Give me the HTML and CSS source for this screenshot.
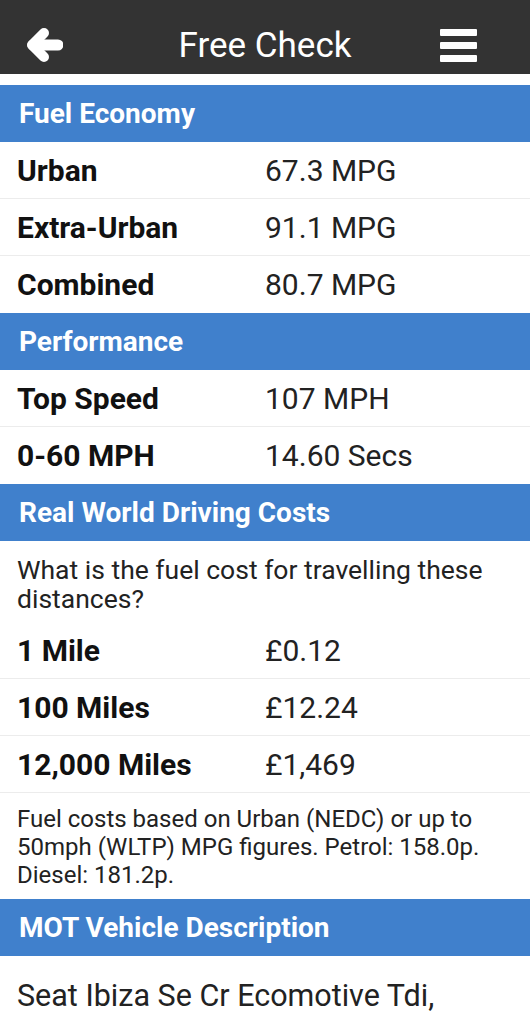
FILE: index.html
```html
<!DOCTYPE html>
<html>
<head>
	<meta charset="utf-8">
	<title>Free Check</title>
	<link rel="stylesheet" href="styles.css">
</head>
<body>
	<header class="topbar">
		<span class="icono atras">
			<svg width="36" height="36" viewBox="0 0 36 36">
				<path d="M6 18 H31" stroke="#fff" stroke-width="11" stroke-linecap="round" fill="none"/>
				<path d="M17 6 L5 18 L17 30" stroke="#fff" stroke-width="10" stroke-linecap="round" stroke-linejoin="round" fill="none"/>
			</svg>
		</span>
		<h1>Free Check</h1>
		<span class="icono menu">
			<span></span><span></span><span></span>
		</span>
	</header>

	<section class="bloque">
		<h2>Fuel Economy</h2>
		<div class="fila"><span class="etiqueta">Urban</span><span class="valor">67.3 MPG</span></div>
		<div class="fila"><span class="etiqueta">Extra-Urban</span><span class="valor">91.1 MPG</span></div>
		<div class="fila"><span class="etiqueta">Combined</span><span class="valor">80.7 MPG</span></div>
	</section>

	<section class="bloque">
		<h2>Performance</h2>
		<div class="fila"><span class="etiqueta">Top Speed</span><span class="valor">107 MPH</span></div>
		<div class="fila"><span class="etiqueta">0-60 MPH</span><span class="valor">14.60 Secs</span></div>
	</section>

	<section class="bloque">
		<h2>Real World Driving Costs</h2>
		<p class="pregunta">What is the fuel cost for travelling these distances?</p>
		<div class="fila"><span class="etiqueta">1 Mile</span><span class="valor">£0.12</span></div>
		<div class="fila"><span class="etiqueta">100 Miles</span><span class="valor">£12.24</span></div>
		<div class="fila"><span class="etiqueta">12,000 Miles</span><span class="valor">£1,469</span></div>
		<p class="nota">Fuel costs based on Urban (NEDC) or up to 50mph (WLTP) MPG figures. Petrol: 158.0p. Diesel: 181.2p.</p>
	</section>

	<section class="bloque">
		<h2>MOT Vehicle Description</h2>
		<p class="descripcion">Seat Ibiza Se Cr Ecomotive Tdi,</p>
	</section>
</body>
</html>
```

FILE: styles.css
```css
body {
	margin: 0;
	font-family: Roboto, "Liberation Sans", sans-serif;
	color: #222;
	background-color: #fff;
}
.topbar {
	display: grid;
	grid-template-columns: 1fr auto 1fr;
	align-items: center;
	height: 58px;
	padding: 16px 27px 0;
	background-color: #333;
	margin-bottom: 11px;
}
.topbar h1 {
	margin: 0;
	font-size: 35px;
	font-weight: normal;
	color: #fff;
}
.icono {
	display: flex;
	width: 37px;
}
.atras svg {
	display: block;
}
.menu {
	justify-self: end;
	margin-right: 26px;
	flex-direction: column;
	gap: 6px;
}
.menu span {
	display: block;
	height: 7px;
	background-color: #fff;
	border-radius: 1px;
}
.bloque h2 {
	margin: 0;
	height: 57px;
	line-height: 57px;
	padding-left: 19px;
	font-size: 28px;
	font-weight: bold;
	color: #fff;
	background-color: #4080cc;
}
.fila {
	display: flex;
	align-items: center;
	box-sizing: border-box;
	height: 57px;
	padding-left: 17px;
	font-size: 30px;
	border-bottom: 1px solid #ececec;
}
.bloque .fila:last-child {
	border-bottom-color: transparent;
}
.etiqueta {
	width: 248px;
	font-weight: bold;
	color: #111;
}
.valor {
	color: #222;
}
.pregunta {
	margin: 0;
	padding: 14px 17px 9px;
	font-size: 26.5px;
	line-height: 29px;
}
.nota {
	margin: 0;
	padding: 12px 17px 10px;
	font-size: 24px;
	line-height: 28px;
}
.descripcion {
	margin: 0;
	padding: 22px 17px;
	font-size: 30.5px;
}
```
